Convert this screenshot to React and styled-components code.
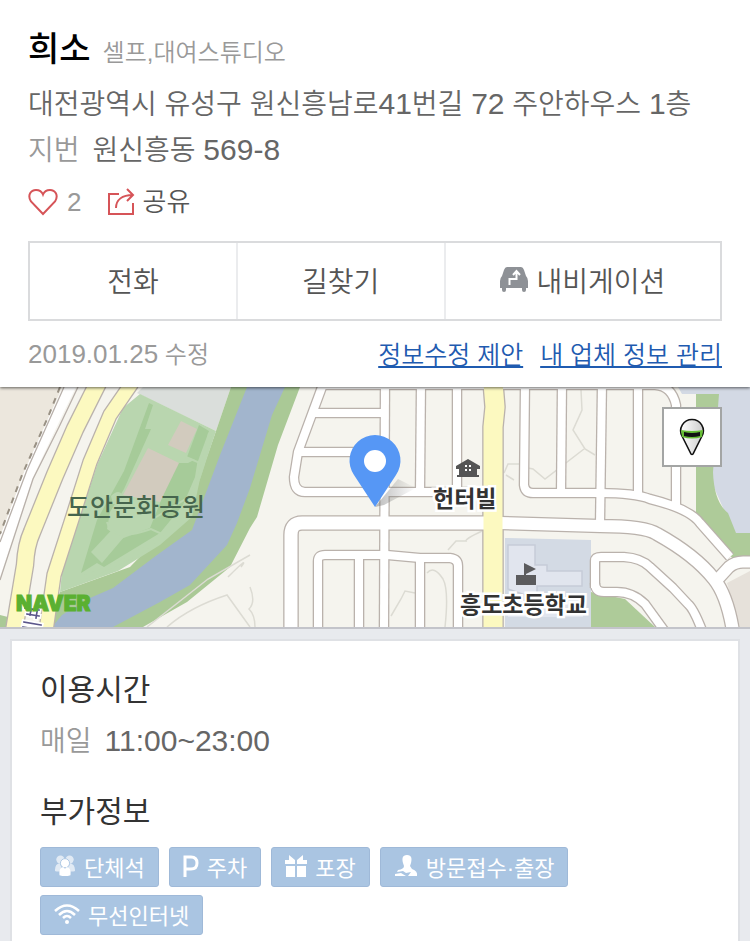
import React from "react";
import styled, { createGlobalStyle } from "styled-components";

const GlobalStyle = createGlobalStyle`
    * {
        box-sizing: border-box;
    }

    body {
        margin: 0;
        background: #e8eaee;
        color: #555;
        font-family: "Liberation Sans", "Noto Sans CJK KR", sans-serif;
        font-weight: 350;
    }
`;

const Summary = styled.header`
    position: relative;
    z-index: 1;
    padding: 21px 28px 12px;
    background: #fff;
    box-shadow: 0 1px 3px rgba(0, 0, 0, 0.6);
`;

const TitleRow = styled.div`
    display: flex;
    align-items: baseline;
    gap: 12px;
    line-height: 56px;
`;

const PlaceName = styled.h1`
    margin: 0;
    font-size: 34px;
    font-weight: 500;
    color: #000;
`;

const Category = styled.span`
    font-size: 24px;
    color: #999;
`;

const InfoLine = styled.p`
    display: flex;
    align-items: baseline;
    gap: 13px;
    margin: 0;
    font-size: 28px;
    line-height: 45px;
    color: #666;
`;

const Label = styled.span`
    color: #999;
`;

const Num = styled.span`
    font-size: ${({ $size }) => $size || 30}px;
`;

const Actions = styled.div`
    display: flex;
    align-items: center;
    gap: 26px;
    height: 58px;
`;

const PlainButton = styled.button`
    padding: 0;
    border: 0;
    background: none;
    font: inherit;
    color: #555;
    cursor: pointer;
`;

const ActionButton = styled(PlainButton)`
    display: flex;
    align-items: center;
    gap: 7px;
    font-size: 26px;
    line-height: 40px;
    color: ${({ $muted }) => ($muted ? "#999" : "#555")};
`;

const ButtonBar = styled.div`
    display: flex;
    margin-top: 10px;
    border: 2px solid #dadbdd;
`;

const BarButton = styled(PlainButton)`
    display: flex;
    flex: ${({ $grow }) => $grow} 0 0;
    align-items: center;
    justify-content: center;
    gap: 8px;
    height: 76px;
    padding-bottom: 2px;
    font-size: 28px;

    & + & {
        border-left: 2px solid #ebecee;
    }
`;

const MetaRow = styled.div`
    display: flex;
    align-items: center;
    justify-content: space-between;
    margin-top: 13px;
    font-size: 24px;
    line-height: 40px;
    color: #999;
`;

const MetaLinks = styled.nav`
    display: flex;
    gap: 17px;
    font-size: 25px;
`;

const MetaLink = styled.a`
    color: #1f5bb0;
    text-decoration: underline;
    text-decoration-thickness: 2px;
    text-underline-offset: 2px;
    text-decoration-skip-ink: none;
`;

const MapArea = styled.section`
    position: relative;
    height: 242px;
    overflow: hidden;
    border-bottom: 2px solid #c3c4ca;
    background: #f5f4ee;
`;

const MapSvg = styled.svg`
    display: block;
    width: 100%;
    height: 240px;
`;

/* Labels are placed from the centre of the map */
const MapLabel = styled.span`
    position: absolute;
    left: calc(50% + ${({ $x }) => $x}px);
    top: ${({ $y }) => $y}px;
    font-size: ${({ $size }) => $size || 23}px;
    line-height: 30px;
    font-weight: ${({ $weight }) => $weight || 700};
    white-space: nowrap;
    color: ${({ $color }) => $color || "#333"};
    paint-order: stroke fill;
    -webkit-text-stroke: ${({ $halo }) => ($halo ? "5px #fff" : "0")};
`;

const Naver = styled.span`
    position: absolute;
    left: 16px;
    bottom: 11px;
    font-family: Inter, sans-serif;
    font-size: 21px;
    font-weight: 900;
    line-height: 24px;
    color: #5ab031;
    -webkit-text-stroke: 1px #5ab031;
`;

const StreetViewButton = styled(PlainButton)`
    position: absolute;
    top: 20px;
    right: 28px;
    width: 60px;
    height: 60px;
    border: 2px solid #a3a5a4;
    background: #fff;

    svg {
        display: block;
        margin: 0 auto;
    }
`;

const Card = styled.main`
    margin: 10px 10px 0;
    padding: 24px 28px 30px;
    border: 2px solid #dfe1e5;
    background: #fff;
`;

const SectionTitle = styled.h2`
    margin: 0;
    font-size: 30px;
    font-weight: 400;
    line-height: 50px;
    color: #333;
`;

const Hours = styled.div`
    margin: 3px 0 23px;
`;

const TagList = styled.ul`
    display: flex;
    flex-wrap: wrap;
    gap: 8px 10px;
    margin: 10px 0 0;
    padding: 0;
    list-style: none;
`;

const TagItem = styled.li`
    display: flex;
    align-items: center;
    gap: 8px;
    height: 40px;
    padding: 0 13px 2px;
    border: 1px solid #9fb9d8;
    border-radius: 3px;
    background: #aac5e2;
    font-size: 22px;
    font-weight: 400;
    color: #fff;
`;

const ROADS = [
    { w: 8, d: "M322 -2 H525 H655 Q672 -1 676 18 V120" },
    { w: 8, d: "M322 0 L298 65 L294 90 Q294 105 305 105 H490" },
    { w: 8, d: "M312 26 H385" },
    { w: 8, d: "M300 65 H385" },
    { w: 8, d: "M385 -4 L384 240" },
    { w: 8, d: "M421 -4 L420 105" },
    { w: 8, d: "M457 -4 V105" },
    { w: 13, d: "M291 244 V148 Q291 136 302 136 H490" },
    { w: 8, d: "M318 244 V174 Q318 168 325 168 H387 L420 171 L450 171 Q458 172 458 179 V244" },
    { w: 8, d: "M359 168 V244" },
    { w: 8, d: "M420 171 V244" },
    { w: 8, d: "M525 -4 L524 98 Q525 106 533 106 H600 Q635 106 650 112 Q690 122 700 136 L730 170" },
    { w: 8, d: "M562 -4 L561 106" },
    { w: 8, d: "M602 -4 L600 137" },
    { w: 8, d: "M638 -4 V108" },
    { w: 12, d: "M500 136 L600 139 Q645 139 657 147 Q695 168 714 192 Q727 208 733 244" },
    { w: 11, d: "M717 193 L729 180 Q735 175 743 175 H756" },
    { w: 8, d: "M595 201 V174 Q595 170 601 170 H624 Q641 171 650 180 L673 201 L688 217 Q694 222 703 246" },
    { w: 8, d: "M595 196 Q595 205 604 205 H617 Q633 205 645 217 L666 246" },
];

const MAIN_ROADS = [
    { w: 16, d: "M98 -4 L75 42 L55 88 L32 145 Q26 158 25 178 L14 244" },
    { w: 13, d: "M132 -4 L110 28 L90 75 L72 132 L54 188 L46 244" },
    { w: 19, d: "M493 -4 L495 20 L493 40 V244" },
];

const MapDrawing = () => (
    <MapSvg viewBox="0 0 750 240" preserveAspectRatio="xMidYMid slice" aria-hidden="true">
        <defs>
            <linearGradient id="pinShadow" x1="0" x2="1">
                <stop offset="0" stopColor="#777" stopOpacity="0.5" />
                <stop offset="1" stopColor="#777" stopOpacity="0" />
            </linearGradient>
        </defs>
        <rect width="750" height="240" fill="#f5f4ee" />

        {/* west side */}
        <path d="M0 0 H62 L48 32 L25 83 L0 150 Z" fill="#ece7dd" />
        <path d="M63 0 L48 32 L25 83 L0 150 V190 L33 90 L58 37 L76 0 Z" fill="#fff" />
        <path d="M64 0 L27 83 L0 155" fill="none" stroke="#b8b0aa" strokeWidth="1.3" />
        <path d="M78 0 L59 40 L33 92 L0 193" fill="none" stroke="#b8b0aa" strokeWidth="1.3" />
        <path d="M60 0 L48 30 L22 88 L0 147" fill="none" stroke="#999184" strokeWidth="2" strokeDasharray="6 6" />
        <path d="M0 228 L8 230 L7 240 H0 Z" fill="#aac996" />

        {/* river and park */}
        <path d="M137 6 L143 0 H231 L216 44 Z" fill="#dadedb" />
        <path d="M231 0 H300 L278 58 L257 130 L250 141 L230 180 L187 215 L143 240 H45 L60 205 L130 180 L190 118 L216 44 Z" fill="#aac996" />
        <path d="M247 0 H285 L272 28 L250 101 L237 136 L227 158 L190 198 L160 215 L113 240 H52 L62 228 L90 211 L113 201 L157 168 L192 143 L220 68 Z" fill="#a2b5cd" />
        <path d="M140 7 L216 44 L200 92 L192 130 L160 158 L118 184 L60 205 L62 185 L97 78 L123 21 Z" fill="#b9d6af" />
        <path d="M149 16 L153 18 L145 42 L151 42 L124 102 L110 125 L107 142 L121 152 L150 141 L176 76 L188 76 L198 71 L195 90 L183 118 L160 146 L104 180 L97 176 L81 186 L97 133 L124 84 Z" fill="#a6cb99" />
        <path d="M199 38 L209 44 L198 74 L187 70 Z" fill="#a6cb99" />
        <path d="M148 61 L179 76 L160 115 L123 108 Z" fill="#d2cbbe" />
        <path d="M181 34 L197 42 L186 66 L168 58 Z" fill="#d2cbbe" />
        <path d="M120 134 L130 143 L102 176 L91 165 Z M111 109 q8 -8 12 0 v8 h-10 Z" fill="#b9d6af" />
        <path d="M210 46 Q200 100 180 128 Q155 165 85 190" fill="none" stroke="#b9d6af" strokeWidth="4" />
        <path d="M107 135 Q112 156 151 142 L164 148 M186 70 L200 76 L192 108 L153 132" fill="none" stroke="#b9d6af" strokeWidth="2" />

        {/* east side */}
        <path d="M678 0 H750 V150 H736 L696 60 V7 H682 Z" fill="#d3d9e4" />
        <path d="M696 7 H719 L713 85 Q714 115 728 126 L736 146 H750 V172 H733 L696 126 Z" fill="#aecb99" />
        <path d="M727 196 L750 184 V240 H740 Z" fill="#e6e1da" />
        <path d="M505 151 L591 153 V240 H505 Z" fill="#d3dae4" />
        <path d="M508 158 H535 V178 H547 V184 H582 V199 H537 V210 H531 L508 202 Z" fill="#e1e5ee" stroke="#c6ccd8" strokeWidth="1.5" />
        <path d="M508 215 H583 V230 H508 Z" fill="#e1e5ee" />
        <path d="M591 205 L625 212 L655 240 H591 Z" fill="#aecb99" />

        {/* footpaths */}
        <g fill="none" stroke="#dcdbd3" strokeWidth="1.5">
            <path d="M581 3 L582 23 L573 43 L585 62 L595 68 M584 62 L545 92 L533 82 L523 80" />
            <path d="M504 86 L508 77 H521 M506 88 L514 93" />
            <path d="M147 240 L208 192 L250 168 M167 240 Q190 220 227 208 L250 240 M228 190 Q250 168 241 180" />
            <path d="M482 144 Q465 152 466 154 L456 154 L448 163 M427 186 Q434 178 443 192 Q449 203 445 240" />
            <path d="M391 229 L401 212 L405 204 L415 206" />
            <path d="M250 200 Q256 215 249 222 Q255 228 255 240" />
        </g>

        <g fill="none" strokeLinejoin="round">
            {[...ROADS, ...MAIN_ROADS].map(({ w, d }) => (
                <path key={d} d={d} stroke="#bab2ac" strokeWidth={w + 2.6} />
            ))}
            {ROADS.map(({ w, d }) => (
                <path key={d} d={d} stroke="#fff" strokeWidth={w} />
            ))}
            {MAIN_ROADS.map(({ w, d }) => (
                <path key={d} d={d} stroke="#fcf9c0" strokeWidth={w} />
            ))}
        </g>

        {/* road sign cut off by the edge */}
        <g fill="none" strokeLinecap="square">
            <path d="M25 221 L39 223 M27 227 L39 229 M24 235 L41 238 M23 240 L41 243 M38 219 L36 231 M31 223 L30 228" stroke="#fff" strokeWidth="5" />
            <path d="M25 221 L39 223 M27 227 L39 229 M24 235 L41 238 M23 240 L41 243 M38 219 L36 231 M31 223 L30 228" stroke="#5b568b" strokeWidth="1.6" />
        </g>

        {/* house */}
        <path d="M456 79 L468 72 L480 79 V82 H477 V88 H479 V90 H457 V88 H459 V82 H456 Z" fill="#555" />
        <path d="M465 78 h2 v2 h-2 z M469 78 h2 v2 h-2 z M465 82 h2 v2 h-2 z M469 82 h2 v2 h-2 z" fill="#fff" />

        {/* school */}
        <path d="M524 176 L536 182 L526 187 V188 H536 V198 H516 V188 H524 Z" fill="#5b5b5d" />

        <path d="M375 120 L398 92 L416 101 L384 118 Z" fill="url(#pinShadow)" />
        <path d="M375 120 L354 88 A25.5 25.5 0 1 1 396 88 Z" fill="#5697f5" />
        <circle cx="375" cy="74" r="11" fill="#fff" />
    </MapSvg>
);

const HeartIcon = () => (
    <svg width="32" height="28" viewBox="0 0 32 28" fill="none" stroke="#d65458" strokeWidth="2">
        <path d="M15 26 L3 13.500 C-1 7 3 2 8 2 C12 2 14 4 15 6.500 C16 4 18 2 22 2 C27 2 31 7 27 13.500 Z" />
    </svg>
);

const ShareIcon = () => (
    <svg width="28" height="28" viewBox="0 0 28 28" fill="none" stroke="#d65458" strokeWidth="2">
        <path d="M12 6 H2 V26 H26 V15" />
        <path d="M9 20 C9 12 15 7 26 7 M20 1 L26 7 L20 13" />
    </svg>
);

const NaviIcon = () => (
    <svg width="28" height="26" viewBox="0 0 28 26">
        <path
            d="M7 0 H21 Q23 0 24 3 L26 9 Q28 11 28 14 V21 H26 V23 Q26 25 24 25 Q22 25 22 23 V21 H6 V23 Q6 25 4 25 Q2 25 2 23 V21 H0 V14 Q0 11 2 9 L4 3 Q5 0 7 0 Z"
            fill="#8e9196"
        />
        <path d="M9.500 18 V12 H16.500 V5 M13 8 L16.500 4 L20 8" fill="none" stroke="#fff" strokeWidth="2" />
    </svg>
);

const StreetViewIcon = () => (
    <svg width="26" height="38" viewBox="0 0 26 38">
        <defs>
            <linearGradient id="bodyShade">
                <stop offset="0" stopColor="#fff" />
                <stop offset="1" stopColor="#ccc" />
            </linearGradient>
        </defs>
        <path
            d="M12 36 L3 18 A11.3 11.3 0 1 1 23 18 L14 36 Q13 37 12 36 Z"
            fill="url(#bodyShade)"
            stroke="#111"
            strokeWidth="1.6"
        />
        <path d="M2 12 Q13 14 24 12 L23 19 Q13 22 3 19 Z" fill="#66bd35" />
        <path d="M5 14 Q13 16 21 14 V18 Q13 20 5 18 Z" fill="#111" />
    </svg>
);

const GroupIcon = () => (
    <svg width="22" height="24" viewBox="0 0 24 24" fill="#fff">
        <g opacity="0.65">
            <circle cx="7" cy="5" r="4.500" />
            <circle cx="17" cy="5" r="4.500" />
            <path d="M1 17 Q1 9 7 9 L9 18 H3 Q1 18 1 17 Z M23 17 Q23 9 16 9 L15 18 H21 Q23 18 23 17 Z" />
        </g>
        <circle cx="12" cy="9" r="5" stroke="#aac5e2" />
        <path d="M6 22 Q5 14 10 13 L12 15 L14 13 Q19 14 18 22 Q12 24 6 22 Z" />
    </svg>
);

const ParkingIcon = () => (
    <svg width="16" height="22" viewBox="0 0 16 22" fill="none" stroke="#fff" strokeWidth="3">
        <path d="M2 22 V2 H8 Q14 2 14 8 Q14 14 8 14 H2" />
    </svg>
);

const GiftIcon = () => (
    <svg width="22" height="22" viewBox="0 0 22 22" fill="#fff">
        <path d="M0 5 H10 V9 H0 Z M12 5 H22 V9 H12 Z M1 11 H10 V22 H1 Z M12 11 H21 V22 H12 Z M4 0 L10 5 H4 Z M18 0 L12 5 H18 Z" />
    </svg>
);

const VisitIcon = () => (
    <svg width="24" height="24" viewBox="0 0 24 24" fill="#fff">
        <path d="M13 1 C8 1 8 5 9 9 L10 12 Q10 15 4 16 L3 18 L9 17 L12 19 L17 18 L14 22 H23 Q24 17 18 15 L16 12 L17 9 C18 5 18 1 13 1 Z M1 20 L7 19 L12 22 H1 Z" />
    </svg>
);

const WifiIcon = () => (
    <svg width="26" height="20" viewBox="0 0 26 20" fill="none" stroke="#fff" strokeWidth="2.500">
        <path d="M1 7 Q13 -4 25 7 M5 11 Q13 3 21 11 M9 14 Q13 10 17 14" />
        <circle cx="13" cy="18" r="2" fill="#fff" stroke="none" />
    </svg>
);

const TAGS = [
    { name: "단체석", icon: <GroupIcon /> },
    { name: "주차", icon: <ParkingIcon /> },
    { name: "포장", icon: <GiftIcon /> },
    { name: "방문접수·출장", icon: <VisitIcon /> },
    { name: "무선인터넷", icon: <WifiIcon /> },
];

const App = () => {
    return (
        <>
            <GlobalStyle />
            <Summary>
                <TitleRow>
                    <PlaceName>희소</PlaceName>
                    <Category>셀프,대여스튜디오</Category>
                </TitleRow>
                <InfoLine>
                    <span>
                        대전광역시 유성구 원신흥남로<Num>41</Num>번길 <Num>72</Num> 주안하우스 <Num>1</Num>층
                    </span>
                </InfoLine>
                <InfoLine>
                    <Label>지번</Label>
                    <span>
                        원신흥동 <Num>569-8</Num>
                    </span>
                </InfoLine>
                <Actions>
                    <ActionButton $muted>
                        <HeartIcon />
                        <span>2</span>
                    </ActionButton>
                    <ActionButton>
                        <ShareIcon />
                        <span>공유</span>
                    </ActionButton>
                </Actions>
                <ButtonBar>
                    <BarButton $grow={3}>전화</BarButton>
                    <BarButton $grow={3}>길찾기</BarButton>
                    <BarButton $grow={4}>
                        <NaviIcon />
                        내비게이션
                    </BarButton>
                </ButtonBar>
                <MetaRow>
                    <span>
                        <Num $size={26}>2019.01.25</Num> 수정
                    </span>
                    <MetaLinks>
                        <MetaLink href="#suggest">정보수정 제안</MetaLink>
                        <MetaLink href="#manage">내 업체 정보 관리</MetaLink>
                    </MetaLinks>
                </MetaRow>
            </Summary>

            <MapArea>
                <MapDrawing />
                <MapLabel $x={-308} $y={105} $size={25} $weight={500} $color="#46654d">
                    도안문화공원
                </MapLabel>
                <MapLabel $x={58} $y={97} $halo>
                    헌터빌
                </MapLabel>
                <MapLabel $x={85} $y={203} $halo>
                    흥도초등학교
                </MapLabel>
                <Naver>NAVER</Naver>
                <StreetViewButton aria-label="거리뷰">
                    <StreetViewIcon />
                </StreetViewButton>
            </MapArea>

            <Card>
                <SectionTitle>이용시간</SectionTitle>
                <Hours>
                    <InfoLine>
                        <Label>매일</Label>
                        <Num>11:00~23:00</Num>
                    </InfoLine>
                </Hours>
                <SectionTitle>부가정보</SectionTitle>
                <TagList>
                    {TAGS.map(({ name, icon }) => (
                        <TagItem key={name}>
                            {icon}
                            {name}
                        </TagItem>
                    ))}
                </TagList>
            </Card>
        </>
    );
};

export default App;
